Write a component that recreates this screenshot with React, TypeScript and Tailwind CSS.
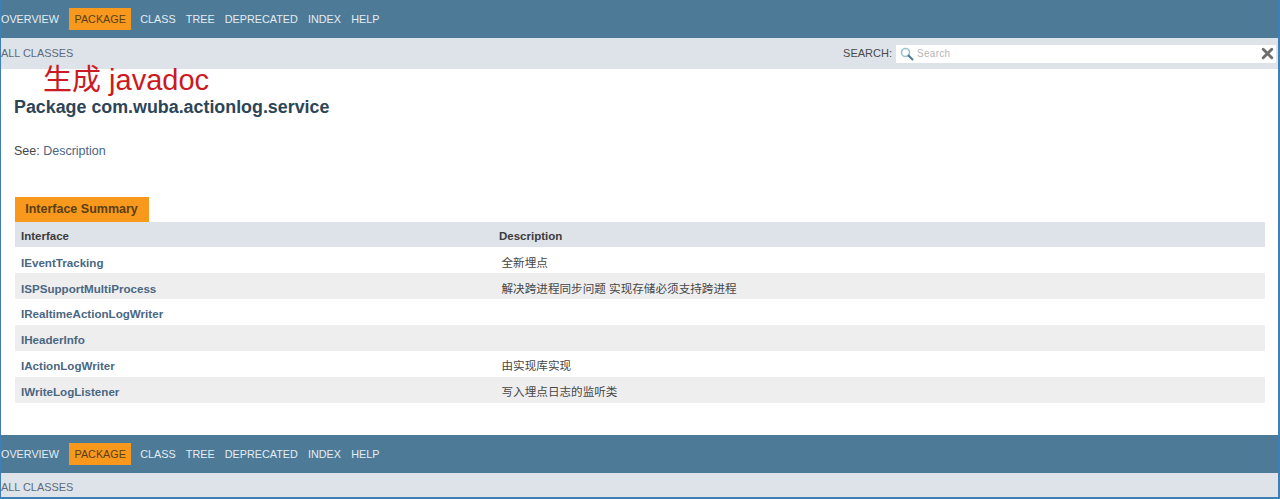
import React from 'react';
import { X } from 'lucide-react';

const sans = "font-['Liberation_Sans','Noto_Sans_CJK_SC',sans-serif]";

const navItems = ['OVERVIEW', 'PACKAGE', 'CLASS', 'TREE', 'DEPRECATED', 'INDEX', 'HELP'];

const rows = [
  { name: 'IEventTracking', desc: '全新埋点' },
  { name: 'ISPSupportMultiProcess', desc: '解决跨进程同步问题 实现存储必须支持跨进程' },
  { name: 'IRealtimeActionLogWriter', desc: '' },
  { name: 'IHeaderInfo', desc: '' },
  { name: 'IActionLogWriter', desc: '由实现库实现' },
  { name: 'IWriteLogListener', desc: '写入埋点日志的监听类' },
];

const TopNav: React.FC = () => (
  <div className="flex h-[38px] items-center bg-[#4d7a97] text-[10.8px] text-[#e4edf3]">
    {navItems.map((item) => (
      <span
        key={item}
        className={
          item === 'PACKAGE'
            ? 'mr-[9px] flex h-[22px] w-[62px] items-center justify-center bg-[#f8981d] text-[#5a4016]'
            : 'mr-[10.2px]'
        }
      >
        {item}
      </span>
    ))}
  </div>
);

const App: React.FC = () => {
  return (
    <div className={`${sans} h-[499px] w-[1280px] overflow-hidden border-r-2 border-l border-b-2 border-r-[#3f7fb5] border-l-[#3f7fb5] border-b-[#3f7fb5] bg-white`}>
      <TopNav />

      <div className="flex h-[31px] items-center justify-between bg-[#dee3e9] pr-[2px]">
        <span className="text-[10.9px] text-[#5d6a7e]">ALL CLASSES</span>
        <div className="flex items-center">
          <span className="mr-[4px] text-[11px] text-[#4a4a4a]">SEARCH:</span>
          <div className="flex h-[18px] w-[380px] items-center bg-white pl-[4px]">
            <svg width="14" height="14" viewBox="0 0 14 14" fill="none">
              <circle cx="5.5" cy="5.5" r="4" stroke="#9cc3d0" strokeWidth="1.6" />
              <path d="M8.5 8.5L12.5 12.5" stroke="#4a7a8a" strokeWidth="2" strokeLinecap="round" />
            </svg>
            <span className="ml-[3px] flex-1 text-[10px] tracking-[0.3px] text-[#b5b5b5]">Search</span>
            <X size={17} strokeWidth={4} className="text-[#6e6e6e]" />
          </div>
        </div>
      </div>

      <div className="relative pt-[28px] pl-[13px]">
        <span className="absolute left-[42px] top-[-7px] text-[29px] leading-[36px] text-[#cc1a22]">生成 javadoc</span>
        <h1 className="text-[17.85px] leading-[20px] font-bold text-[#2c4557]">Package com.wuba.actionlog.service</h1>
        <p className="mt-[26px] text-[12.5px] leading-[16px] text-[#474747]">
          See: <span className="text-[#4a6782]">Description</span>
        </p>
      </div>

      <div className="mt-[37.5px] ml-[13.5px] mr-[13px]">
        <div className="flex h-[25px] w-[134px] items-center justify-center bg-[#f8981d] pt-[1px] text-[12.5px] font-bold text-[#5a3f14]">
          Interface Summary
        </div>
        <div className="flex h-[25.9px] items-center bg-[#dee3e9] pt-[4px] text-[11.5px] font-bold text-[#3b3b3b]">
          <span className="w-[484.5px] pl-[6.5px]">Interface</span>
          <span>Description</span>
        </div>
        {rows.map((row, index) => (
          <div
            key={row.name}
            className={`flex h-[25.9px] items-center pt-[4px] ${index % 2 === 0 ? 'bg-white' : 'bg-[#eeeeef]'}`}
          >
            <span className="w-[487px] pl-[6.5px] text-[11.6px] font-bold text-[#4a6782]">{row.name}</span>
            <span className="text-[11.6px] text-[#474747]">{row.desc}</span>
          </div>
        ))}
      </div>

      <div className="mt-[32px]">
        <TopNav />
        <div className="flex h-[26px] items-center bg-[#dee3e9] pt-[3px]">
          <span className="text-[10.9px] text-[#5d6a7e]">ALL CLASSES</span>
        </div>
      </div>
    </div>
  );
};

export default App;
